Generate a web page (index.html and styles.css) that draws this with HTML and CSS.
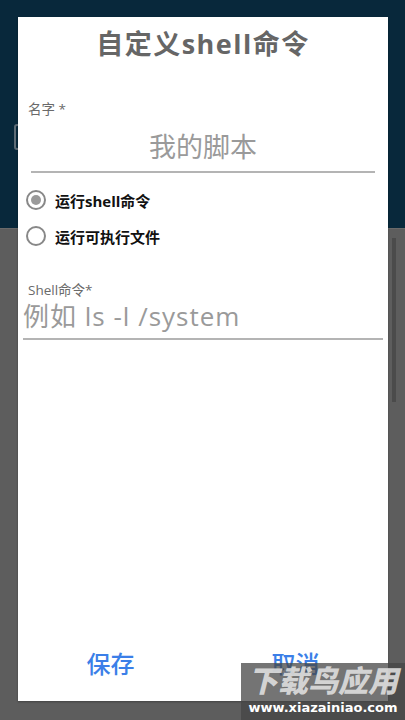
FILE: index.html
```html
<!DOCTYPE html>
<html lang="zh-CN">
<head>
<meta charset="utf-8">
<title>自定义shell命令</title>
<link rel="stylesheet" href="styles.css">
</head>
<body>
<div class="screen">
  <div class="bg-top">
    <div class="edge-box"></div>
  </div>
  <div class="bg-bottom">
    <div class="scrollbar"></div>
  </div>

  <div class="dialog">
    <div class="title">自定义shell命令</div>
    <div class="label label-name">名字 *</div>
    <div class="input input-name">我的脚本</div>
    <div class="radio-row radio-first">
      <span class="radio checked"></span>
      <span class="radio-text">运行shell命令</span>
    </div>
    <div class="radio-row">
      <span class="radio"></span>
      <span class="radio-text">运行可执行文件</span>
    </div>
    <div class="label label-cmd">Shell命令*</div>
    <div class="input input-cmd">例如 ls -l /system</div>
    <div class="spacer"></div>
    <div class="buttons">
      <div class="btn">保存</div>
      <div class="btn">取消</div>
    </div>
  </div>

  <div class="watermark">
    <div class="wm-big">下载鸟应用</div>
    <div class="wm-small">www.xiazainiao.com</div>
  </div>
</div>
</body>
</html>
```

FILE: styles.css
```css
html, body {
  margin: 0;
  padding: 0;
}
body {
  width: 405px;
  height: 720px;
  overflow: hidden;
  font-family: "Open Sans", "Noto Sans CJK SC", sans-serif;
}
.screen {
  position: relative;
  width: 405px;
  height: 720px;
  display: flex;
  flex-direction: column;
}
.bg-top {
  height: 228px;
  background: #08283b;
  position: relative;
}
.edge-box {
  position: absolute;
  left: 14px;
  top: 124px;
  width: 10px;
  height: 22px;
  border: 2px solid #5e6c76;
  border-radius: 3px;
}
.bg-bottom {
  flex: 1;
  background: #5d5d5d;
  border-top: 1px solid #6a6a6a;
  position: relative;
}
.scrollbar {
  position: absolute;
  right: 9px;
  top: 9px;
  width: 4px;
  height: 164px;
  background: #4b4b4b;
}
.dialog {
  position: absolute;
  left: 18px;
  top: 17px;
  width: 370px;
  height: 684px;
  background: #ffffff;
  display: flex;
  flex-direction: column;
  box-shadow: 0 1px 2px rgba(0,0,0,0.3);
}
.title {
  height: 54px;
  line-height: 54px;
  text-align: center;
  font-size: 27px;
  font-weight: 700;
  letter-spacing: 1.5px;
  color: #666666;
}
.label {
  height: 20px;
  line-height: 20px;
  font-size: 13.5px;
  color: #6a6a6a;
  padding-left: 10px;
}
.label-name {
  margin-top: 28px;
}
.input {
  font-size: 27px;
  color: #9a9a9a;
  border-bottom: 2px solid #b4b4b4;
}
.input-name {
  margin: 10px 13px 0 13px;
  height: 36px;
  line-height: 36px;
  padding-bottom: 6px;
  text-align: center;
}
.radio-row {
  height: 36px;
  display: flex;
  align-items: center;
  padding-left: 8px;
}
.radio-first {
  margin-top: 9px;
}
.radio {
  width: 16px;
  height: 16px;
  border: 2px solid #888888;
  border-radius: 50%;
  display: flex;
  align-items: center;
  justify-content: center;
  flex-shrink: 0;
}
.radio.checked::after {
  content: "";
  width: 10px;
  height: 10px;
  border-radius: 50%;
  background: #9a9a9a;
}
.radio-text {
  margin-left: 9px;
  font-size: 15px;
  font-weight: 700;
  color: #111111;
}
.label-cmd {
  margin-top: 26px;
}
.input-cmd {
  margin: 0 5px;
  height: 32px;
  line-height: 32px;
  padding-bottom: 6px;
  font-size: 26px;
  letter-spacing: 1px;
}
.spacer {
  flex: 1;
}
.buttons {
  display: flex;
  height: 50px;
  margin-bottom: 12px;
}
.btn {
  flex: 1;
  text-align: center;
  line-height: 50px;
  font-size: 24px;
  font-weight: 500;
  color: #3b7fe8;
}
.watermark {
  position: absolute;
  left: 241px;
  top: 663px;
  width: 164px;
  height: 57px;
  background: rgba(70, 70, 70, 0.75);
  display: flex;
  flex-direction: column;
  align-items: center;
}
.wm-big {
  font-size: 30px;
  font-weight: 900;
  font-style: italic;
  line-height: 36px;
  color: rgba(225, 225, 225, 0.9);
}
.wm-small {
  font-family: "DejaVu Sans", sans-serif;
  font-size: 13px;
  font-weight: 700;
  line-height: 17px;
  color: #ffffff;
}
```
